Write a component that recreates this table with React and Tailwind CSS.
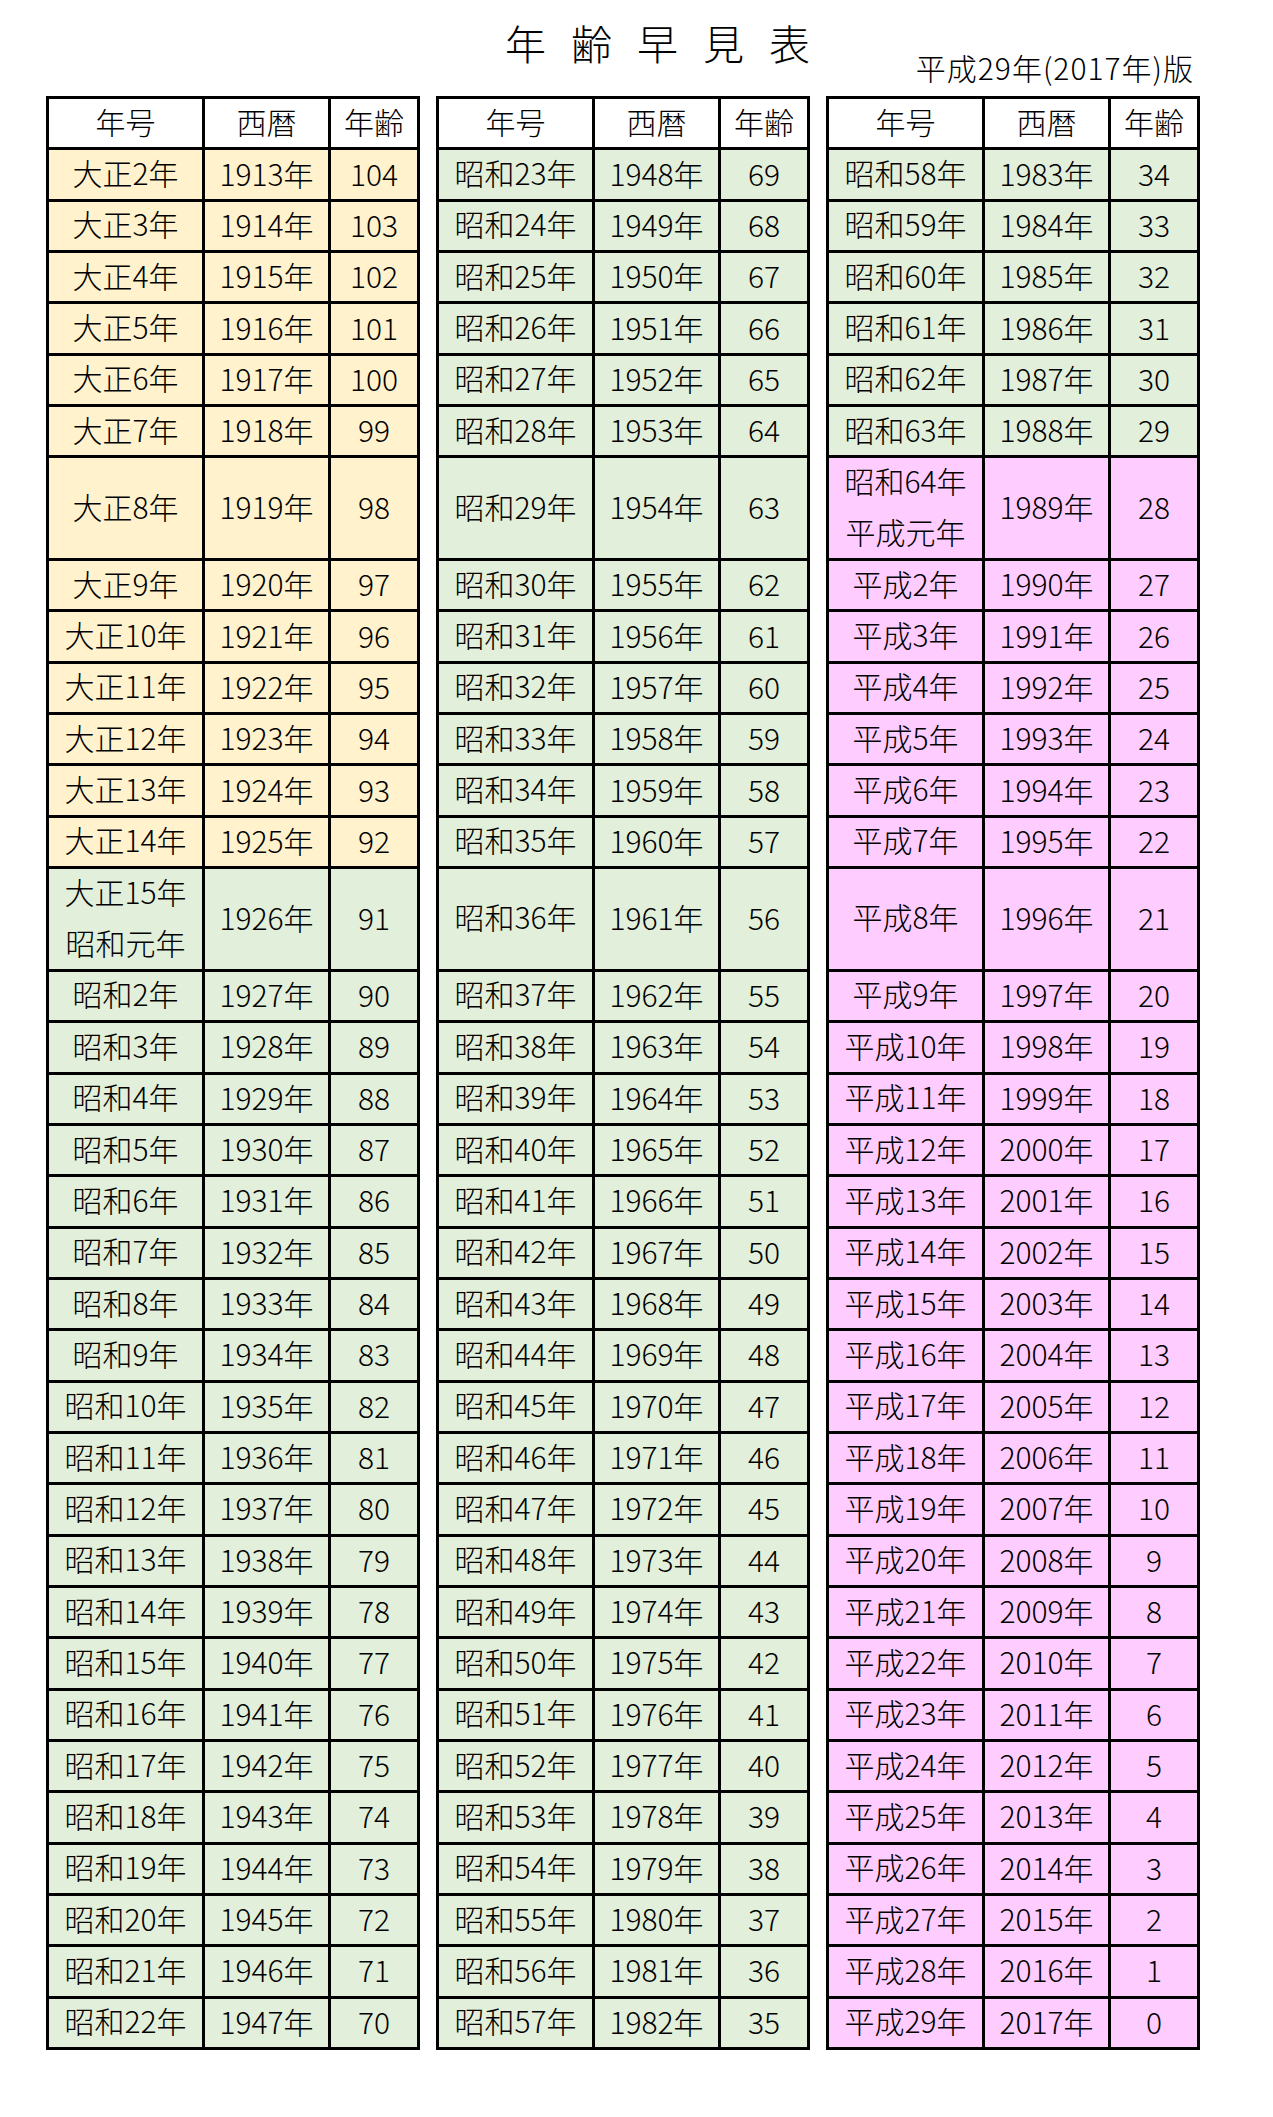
import React from 'react';

// 年齢早見表 — three column tables, 平成29年(2017年)基準
const BASE_YEAR = 2017;
const STARTS = [1913, 1948, 1983];

function eraLabel(year) {
  if (year === 1926) return ['大正15年', '昭和元年'];
  if (year === 1989) return ['昭和64年', '平成元年'];
  if (year <= 1925) return [`大正${year - 1911}年`];
  if (year <= 1988) return [`昭和${year - 1925}年`];
  return [`平成${year - 1988}年`];
}

function rowColor(year) {
  if (year <= 1925) return 'bg-[#fff2cc]';
  if (year <= 1988) return 'bg-[#e2efda]';
  return 'bg-[#ffccff]';
}

function AgeTable({ start }) {
  const rows = Array.from({ length: 35 }, (_, i) => start + i);

  return (
    <div className="grid h-[1954px] w-[374px] grid-cols-[153px_123px_86px] grid-rows-[repeat(38,minmax(0,1fr))] gap-[3px] border-[3px] border-black bg-black">
      {['年号', '西暦', '年齢'].map((h) => (
        <div key={h} className="flex items-center justify-center bg-white pb-[4px]">
          {h}
        </div>
      ))}
      {rows.map((year, i) => {
        // 7th and 14th rows are double height in every column
        const tall = i === 6 || i === 13;
        const span = tall ? 'row-span-2' : '';
        const bg = rowColor(year);
        const label = eraLabel(year);
        return (
          <React.Fragment key={year}>
            <div className={`${span} ${bg} flex flex-col items-center justify-center pb-[4px] leading-[51px]`}>
              {label.map((t) => (
                <span key={t}>{t}</span>
              ))}
            </div>
            <div className={`${span} ${bg} flex items-center justify-center pb-[4px]`}>{year}年</div>
            <div className={`${span} ${bg} flex items-center justify-center pb-[4px]`}>{BASE_YEAR - year}</div>
          </React.Fragment>
        );
      })}
    </div>
  );
}

export default function App() {
  return (
    <div
      className="min-h-[2117px] w-[1273px] bg-white pl-[46px] text-[30px] font-light leading-none text-black"
      style={{ fontFamily: '"Noto Sans CJK JP", "Noto Sans", sans-serif' }}
    >
      {/* ── Title row ── */}
      <div className="flex h-[96px] items-start">
        <h1 className="ml-[459px] mt-[22px] text-[41px] font-light leading-[40px] tracking-[25px]">
          年齢早見表
        </h1>
        <p className="ml-auto mr-[79px] mt-[52px] text-[30px] leading-[30px] tracking-[1px]">
          平成29年(2017年)版
        </p>
      </div>

      {/* ── Tables ── */}
      <div className="flex gap-[16px]">
        {STARTS.map((s) => (
          <AgeTable key={s} start={s} />
        ))}
      </div>
    </div>
  );
}
